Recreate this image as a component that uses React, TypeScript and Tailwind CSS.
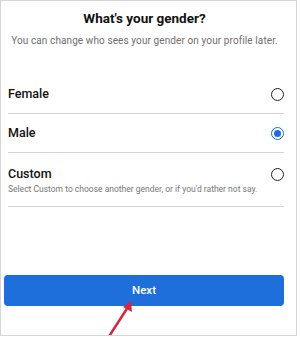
import React, { useState } from 'react';

type Option = { id: string; label: string; hint?: string };

const options: Option[] = [
  { id: 'female', label: 'Female' },
  { id: 'male', label: 'Male' },
  { id: 'custom', label: 'Custom', hint: "Select Custom to choose another gender, or if you'd rather not say." },
];

const Radio: React.FC<{ checked: boolean }> = ({ checked }) => (
  <span
    className={
      checked
        ? 'w-[13px] h-[13px] rounded-full border-[1.5px] border-[#1b6fe0] flex items-center justify-center shrink-0'
        : 'block w-[13px] h-[13px] rounded-full border-[1.5px] border-[#222] shrink-0'
    }
  >
    {checked && <span className="w-[7px] h-[7px] rounded-full bg-[#1b6fe0]" />}
  </span>
);

const App: React.FC = () => {
  const [selected, setSelected] = useState('male');

  return (
    <div className="relative w-[297px] h-[336px] border border-[#d6d6d6] bg-white flex flex-col font-['Roboto',sans-serif] overflow-hidden">
      <div className="pt-[7px] pr-[8px] text-center">
        <h1 className="text-[13.5px] leading-[20px] font-bold text-[#111]">What's your gender?</h1>
        <p className="mt-[6px] text-[10px] leading-[14px] text-[#6e6e6e] tracking-[0.1px]">
          You can change who sees your gender on your profile later.
        </p>
      </div>

      <div className="mt-[27px] ml-[7px] mr-[12px]">
        {options.map(opt => (
          <div
            key={opt.id}
            onClick={() => setSelected(opt.id)}
            className={
              opt.hint
                ? 'h-[54px] border-b border-[#d4d4d4] flex items-start justify-between pt-[13px]'
                : 'h-[39px] border-b border-[#d4d4d4] flex items-center justify-between'
            }
          >
            <div>
              <div className="text-[12.5px] leading-[16px] font-medium text-[#111]">{opt.label}</div>
              {opt.hint && (
                <div className="text-[8.5px] leading-[13px] text-[#777] mt-[1px] whitespace-nowrap">{opt.hint}</div>
              )}
            </div>
            <div className={opt.hint ? 'pt-[2px]' : ''}>
              <Radio checked={selected === opt.id} />
            </div>
          </div>
        ))}
      </div>

      <div className="mt-auto mb-[29px] ml-[3px] mr-[12px]">
        <button className="w-full h-[31px] rounded-[4px] bg-[#1e6edc] text-white text-[11.5px] font-medium">Next</button>
      </div>

      <svg className="absolute left-[100px] top-[296px] w-[40px] h-[41px]" viewBox="0 0 40 41">
        <line x1="7" y1="41" x2="27" y2="10" stroke="#d7263d" strokeWidth="2.5" />
        <polygon points="30,4 31,15 22,10" fill="#d7263d" />
      </svg>
    </div>
  );
};

export default App;
